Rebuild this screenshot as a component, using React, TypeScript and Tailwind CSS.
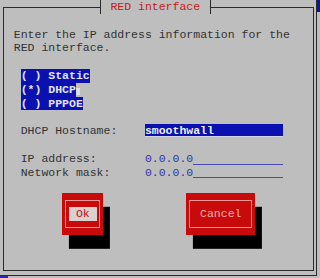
const line = 'border-[#2b2b2b]'

function Row({ children, className = '' }: { children: React.ReactNode; className?: string }) {
  return <div className={`flex h-[13.8px] ${className}`}>{children}</div>
}

function Radio({ mark, label, cursor = false }: { mark: string; label: string; cursor?: boolean }) {
  return (
    <Row>
      <span className="bg-[#0b10b0] text-[#e4e4ec] font-bold whitespace-pre">{`(${mark}) ${label}`}</span>
      {cursor && <span className="self-center mt-[3px] w-[4px] h-[7px] bg-[#dcdce6]" />}
    </Row>
  )
}

function Field({ label, value }: { label: string; value: string }) {
  return (
    <Row>
      <span className="w-[124.2px] whitespace-pre text-[#333]">{label}</span>
      <div className="w-[138px] flex">
        <span className="text-[#3434aa]">{value}</span>
        <span className="flex-1 border-b border-[#4a4ab4] mb-[1px]" />
      </div>
    </Row>
  )
}

function TuiButton({ label, focused, cols }: { label: string; focused: boolean; cols: number }) {
  const size = cols === 6 ? 'w-[41.4px]' : 'w-[69px]'
  const inner = cols === 6 ? 'w-[27.6px]' : 'w-[55.2px]'
  return (
    <div className={`${size} h-[41.4px] bg-[#c80a0a] shadow-[6.9px_13.8px_0_0_#000] px-[3px] py-[6.4px]`}>
      <div className="h-full border border-[#ea9494] flex items-center justify-center">
        <span
          className={`${inner} h-[13.8px] text-center ${focused ? 'bg-[#dccfcf] text-[#b01010]' : 'text-[#f2b0b0]'}`}
        >
          {label}
        </span>
      </div>
    </div>
  )
}

export default function App() {
  return (
    <div className="w-[320px] h-[278px] bg-[#bebebe] flex flex-col overflow-hidden font-['Liberation_Mono',monospace] text-[11.5px] leading-[13.8px]">
      <div className="flex">
        <div className={`w-[317px] h-[276px] border-r border-b ${line} pl-[3px]`}>
          <div className="w-[311px]">
            {/* title bar */}
            <div className="flex h-[14px]">
              <div className={`w-[97px] mt-[7px] h-[7px] border-t border-l ${line}`} />
              <div className={`w-[111px] h-[14px] border-l border-r ${line} pl-[9.4px] text-[#c42020]`}>
                RED interface
              </div>
              <div className={`flex-1 mt-[7px] h-[7px] border-t border-r ${line}`} />
            </div>

            <div className={`h-[257px] border-l border-r border-b ${line} pt-[13.6px]`}>
              <div className="pl-[9.8px] text-[#333]">
                <div>Enter the IP address information for the</div>
                <div>RED interface.</div>
              </div>

              <div className="pl-[16.7px] mt-[13.8px]">
                <Radio mark=" " label="Static" />
                <Radio mark="*" label="DHCP" cursor />
                <Radio mark=" " label="PPPOE" />
              </div>

              <div className="pl-[16.7px] mt-[13.8px]">
                <Row>
                  <span className="w-[124.2px] text-[#333]">DHCP Hostname:</span>
                  <div className="w-[138px] h-[13px] bg-[#0b10b0] border-b border-[#d4d4e4]">
                    <span className="text-[#f0f0f4] font-bold leading-[12px]">smoothwall</span>
                  </div>
                </Row>
              </div>

              <div className="pl-[16.7px] mt-[13.8px]">
                <Field label="IP address:" value="0.0.0.0" />
                <Field label="Network mask:" value="0.0.0.0" />
              </div>

              <div className="flex pl-[58.1px] mt-[13.8px] gap-[82.8px]">
                <TuiButton label="Ok" focused cols={6} />
                <TuiButton label="Cancel" focused={false} cols={10} />
              </div>
            </div>
          </div>
        </div>
        <div className="flex-1 h-[12px] bg-[#0b10b0]" />
      </div>
      <div className="flex h-[2px]">
        <div className="w-[8px] bg-[#2828b0]" />
      </div>
    </div>
  )
}
